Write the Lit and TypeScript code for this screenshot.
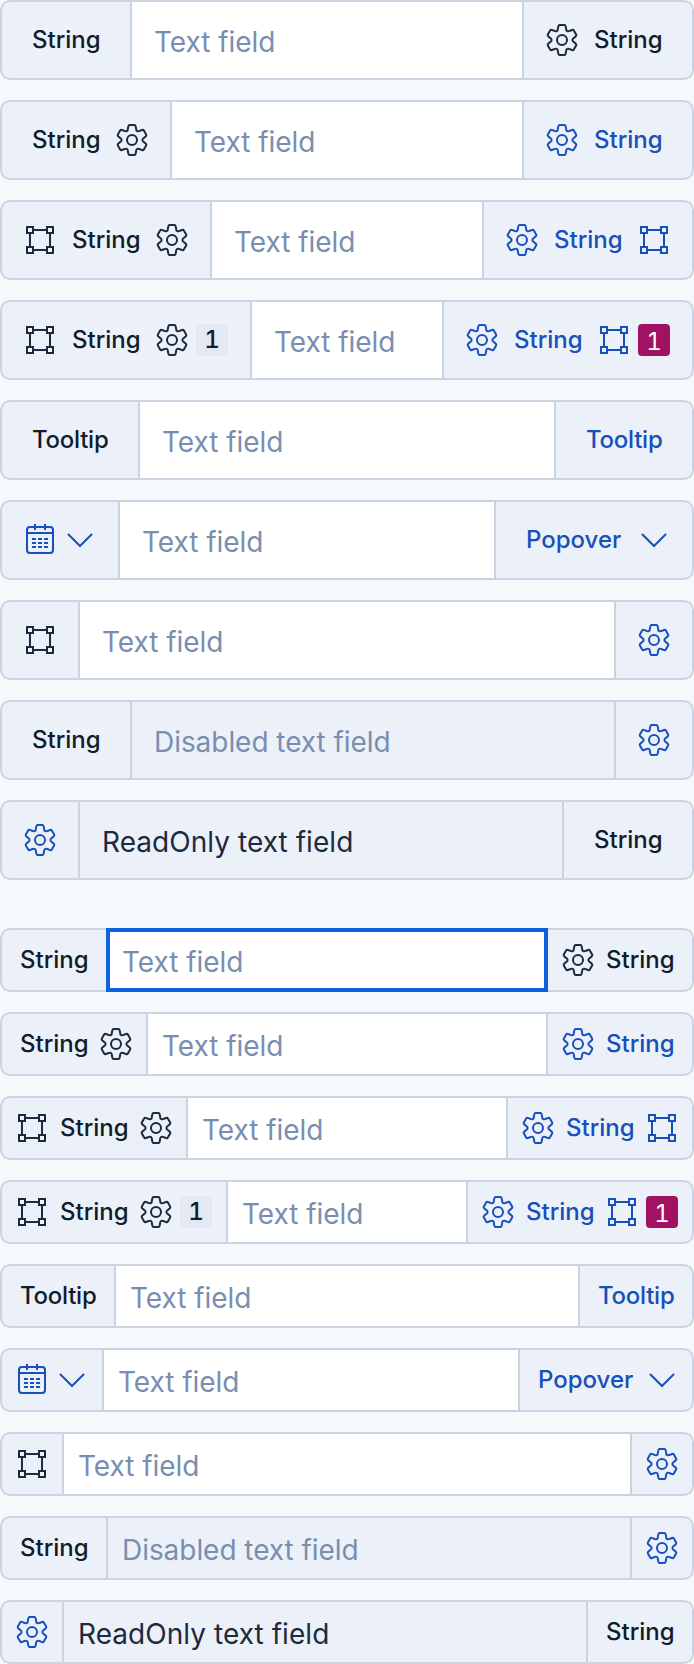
import { LitElement, html, css, svg, nothing } from "lit";
import { customElement, property } from "lit/decorators.js";

type Item = { kind: "text" | "icon" | "badge"; value: string; accent?: boolean };
type Side = { items: Item[]; action?: boolean };
type Row = { before: Side; after: Side; text?: string; state?: string };

const t = (value: string): Item => ({ kind: "text", value });
const i = (value: string): Item => ({ kind: "icon", value });
const badge = (value: string, accent = false): Item => ({ kind: "badge", value, accent });
const plain = (...items: Item[]): Side => ({ items });
const action = (...items: Item[]): Side => ({ items, action: true });

const rows: Row[] = [
  { before: plain(t("String")), after: plain(i("gear"), t("String")), state: "first" },
  { before: plain(t("String"), i("gear")), after: action(i("gear"), t("String")) },
  { before: plain(i("frame"), t("String"), i("gear")), after: action(i("gear"), t("String"), i("frame")) },
  {
    before: plain(i("frame"), t("String"), i("gear"), badge("1")),
    after: action(i("gear"), t("String"), i("frame"), badge("1", true)),
  },
  { before: plain(t("Tooltip")), after: action(t("Tooltip")) },
  { before: action(i("calendar"), i("chevron")), after: action(t("Popover"), i("chevron")) },
  { before: plain(i("frame")), after: action(i("gear")) },
  { before: plain(t("String")), after: action(i("gear")), text: "Disabled text field", state: "disabled" },
  { before: action(i("gear")), after: plain(t("String")), text: "ReadOnly text field", state: "readonly" },
];

// One tooth and the valley after it, centred on the origin and repeated by rotation.
const gearPath = (() => {
  const shoulder = [3.6, -13.9];
  const corner = [3.4, -15];
  const tip = [2.3, -15];
  const root = [4.1, -11.5];
  const bend = [3.9, -9.1];
  const mirror = ([x, y]: number[]) => [-x, y];
  const rot = ([x, y]: number[], k: number) => {
    const a = (k * Math.PI) / 3;
    return `${(x * Math.cos(a) - y * Math.sin(a)).toFixed(2)} ${(x * Math.sin(a) + y * Math.cos(a)).toFixed(2)}`;
  };
  let d = `M${rot(mirror(root), 0)}`;
  for (let k = 0; k < 6; k++) {
    d += `L${rot(mirror(shoulder), k)}Q${rot(mirror(corner), k)} ${rot(mirror(tip), k)}`;
    d += `L${rot(tip, k)}Q${rot(corner, k)} ${rot(shoulder, k)}L${rot(root, k)}`;
    d += `C${rot(bend, k)} ${rot(mirror(bend), k + 1)} ${rot(mirror(root), k + 1)}`;
  }
  return d + "Z";
})();

const icons: Record<string, unknown> = {
  gear: svg`<g transform="translate(16 16)"><path d=${gearPath}/><circle r="5"/></g>`,
  frame: svg`<path d="M3 3h6v6H3zM23 3h6v6h-6zM3 23h6v6H3zM23 23h6v6h-6zM9 6h14M9 26h14M6 9v14M26 9v14"/>`,
  calendar: svg`<path d="M6 3h20q3 0 3 3v20q0 3-3 3H6q-3 0-3-3V6q0-3 3-3zM3 9h26M11 0v6M21 0v6M8 15h4M14 15h4M20 15h4M8 19h4M14 19h4M20 19h4M8 23h4M14 23h4M20 23h4"/>`,
  chevron: svg`<path d="M4 10l12 12 12-12"/>`,
};

@customElement("form-row")
class FormRow extends LitElement {
  @property({ attribute: false }) row!: Row;
  @property({ type: Boolean, reflect: true }) compressed = false;

  static styles = css`
    :host {
      --pad: 24px;
      --label-pad: 8px;
      display: block;
      height: 80px;
      font-family: Inter, sans-serif;
    }
    :host([compressed]) {
      --pad: 16px;
      --label-pad: 4px;
      height: 64px;
    }
    .row {
      display: flex;
      box-sizing: border-box;
      height: 100%;
      position: relative;
      border-radius: 10px;
      background: #ecf1f9;
      overflow: hidden;
    }
    .row::after {
      content: "";
      position: absolute;
      inset: 0;
      border: 2px solid #cad3e2;
      border-radius: 10px;
      pointer-events: none;
    }
    .side {
      display: flex;
      box-sizing: border-box;
      flex: none;
      align-items: center;
      gap: 8px;
      padding: 0 var(--pad);
      color: #111c2c;
    }
    .before { box-shadow: inset -2px 0 #cad3e2; }
    .after { box-shadow: inset 2px 0 #cad3e2; }
    .action { color: #1750ba; }
    .label {
      padding: 0 var(--label-pad);
      font-size: 24px;
      line-height: 32px;
      font-weight: 500;
      white-space: nowrap;
    }
    .string { width: 68px; }
    .tooltip { width: 76px; letter-spacing: -0.25px; }
    .popover { width: 96px; }
    svg {
      display: block;
      flex: none;
      width: 32px;
      height: 32px;
      fill: none;
      stroke: #1d2a3e;
      stroke-width: 2;
    }
    .action svg { stroke: #1750ba; }
    .badge {
      width: 32px;
      height: 32px;
      border-radius: 4px;
      background: #e3e8f2;
      color: #111c2c;
      font-size: 24px;
      line-height: 32px;
      font-weight: 500;
      font-feature-settings: "tnum";
      text-align: center;
    }
    .accent {
      background: #a11262;
      color: #fff;
      font-weight: 400;
      line-height: 36px;
    }
    .field {
      flex: 1;
      min-width: 0;
      box-sizing: border-box;
      display: flex;
      align-items: center;
      padding: 4px 0 0 calc(var(--pad) - 2px);
      background: #fff;
      color: #798eaf;
      font-size: 28px;
      line-height: 36px;
      letter-spacing: -0.05px;
      white-space: nowrap;
    }
    .disabled, .readonly { background: #ecf1f9; }
    .readonly { color: #1d2a3e; letter-spacing: 0.05px; }
    :host([compressed]) .first {
      position: relative;
      z-index: 1;
      margin: 0 -2px;
      padding-left: var(--pad);
      box-shadow: inset 0 0 0 4px #0b64dd;
    }
  `;

  private item(item: Item) {
    if (item.kind === "icon") return html`<svg viewBox="0 0 32 32">${icons[item.value] ?? nothing}</svg>`;
    if (item.kind === "badge") return html`<span class="badge ${item.accent ? "accent" : ""}">${item.value}</span>`;
    return html`<span class="label ${item.value.toLowerCase()}">${item.value}</span>`;
  }

  private side(side: Side, position: string) {
    return html`<div class="side ${position} ${side.action ? "action" : ""}">
      ${side.items.map((item) => this.item(item))}
    </div>`;
  }

  render() {
    const { before, after, text, state } = this.row;
    return html`<div class="row">
      ${this.side(before, "before")}
      <div class="field ${state ?? ""}">${text ?? "Text field"}</div>
      ${this.side(after, "after")}
    </div>`;
  }
}

@customElement("app-root")
class AppRoot extends LitElement {
  static styles = css`
    :host {
      display: block;
      height: 1664px;
      background: #f6f9fc;
    }
    .group { display: grid; gap: 20px; }
    .group + .group { margin-top: 48px; }
  `;

  render() {
    return html`
      <div class="group">${rows.map((row) => html`<form-row .row=${row}></form-row>`)}</div>
      <div class="group">${rows.map((row) => html`<form-row compressed .row=${row}></form-row>`)}</div>
    `;
  }
}
